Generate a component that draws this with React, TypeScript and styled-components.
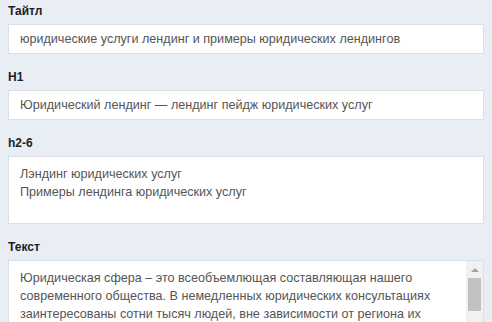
import React from "react";
import styled, { createGlobalStyle } from "styled-components";

const GlobalStyle = createGlobalStyle`
  html, body {
    margin: 0;
    padding: 0;
    background: #e9eef5;
  }
  body {
    font-family: "Liberation Sans", Arial, sans-serif;
  }
`;

const Form = styled.div`
  display: flex;
  flex-direction: column;
  padding: 4px 8px 0;
`;

const Field = styled.div`
  display: flex;
  flex-direction: column;
  margin-bottom: 16px;
`;

const Label = styled.label`
  font-size: 12px;
  line-height: 14px;
  font-weight: 700;
  color: #1f1f1f;
  margin-bottom: 6px;
`;

const TextInput = styled.input`
  box-sizing: border-box;
  width: 100%;
  height: 30px;
  padding: 0 11px;
  border: 1px solid #dbe0e8;
  background: #ffffff;
  font-family: "Liberation Sans", Arial, sans-serif;
  font-size: 12.6px;
  color: #555555;
  outline: none;
`;

const TextBox = styled.div<{ $height: number }>`
  display: flex;
  flex-direction: row;
  box-sizing: border-box;
  height: ${(p) => p.$height}px;
  border: 1px solid #dbe0e8;
  background: #ffffff;
`;

const TextArea = styled.textarea<{ $padRight: number }>`
  flex: 1;
  min-width: 0;
  box-sizing: border-box;
  height: 100%;
  margin: 0;
  padding: 8px ${(p) => p.$padRight}px 8px 11px;
  border: none;
  background: transparent;
  font-family: "Liberation Sans", Arial, sans-serif;
  font-size: 12.6px;
  line-height: 18px;
  color: #555555;
  resize: none;
  outline: none;
  overflow: hidden;
`;

const ScrollTrack = styled.div`
  width: 17px;
  flex-shrink: 0;
  display: flex;
  flex-direction: column;
  align-items: center;
  background: #f1f1f1;
`;

const ScrollArrow = styled.div`
  height: 17px;
  width: 100%;
  display: flex;
  align-items: center;
  justify-content: center;

  &::before {
    content: "";
    width: 0;
    height: 0;
    border-left: 4px solid transparent;
    border-right: 4px solid transparent;
    border-bottom: 4px solid #a3a3a3;
  }
`;

const ScrollThumb = styled.div`
  width: 13px;
  height: 33px;
  background: #c1c1c1;
`;

const bodyText =
  "Юридическая сфера – это всеобъемлющая составляющая нашего современного общества. В немедленных юридических консультациях заинтересованы сотни тысяч людей, вне зависимости от региона их проживания. Именно поэтому юридические услуги сегодня всё чаще продвигаются через интернет, а лендинг становится одним из самых эффективных инструментов привлечения клиентов.";

export default function App() {
  return (
    <>
      <GlobalStyle />
      <Form>
        <Field>
          <Label>Тайтл</Label>
          <TextInput
            readOnly
            value="юридические услуги лендинг и примеры юридических лендингов"
          />
        </Field>
        <Field>
          <Label>H1</Label>
          <TextInput
            readOnly
            value="Юридический лендинг — лендинг пейдж юридических услуг"
          />
        </Field>
        <Field>
          <Label>h2-6</Label>
          <TextBox $height={68}>
            <TextArea
              $padRight={11}
              readOnly
              value={"Лэндинг юридических услуг\nПримеры лендинга юридических услуг"}
            />
          </TextBox>
        </Field>
        <Field>
          <Label>Текст</Label>
          <TextBox $height={150}>
            <TextArea $padRight={4} readOnly value={bodyText} />
            <ScrollTrack>
              <ScrollArrow />
              <ScrollThumb />
            </ScrollTrack>
          </TextBox>
        </Field>
      </Form>
    </>
  );
}
